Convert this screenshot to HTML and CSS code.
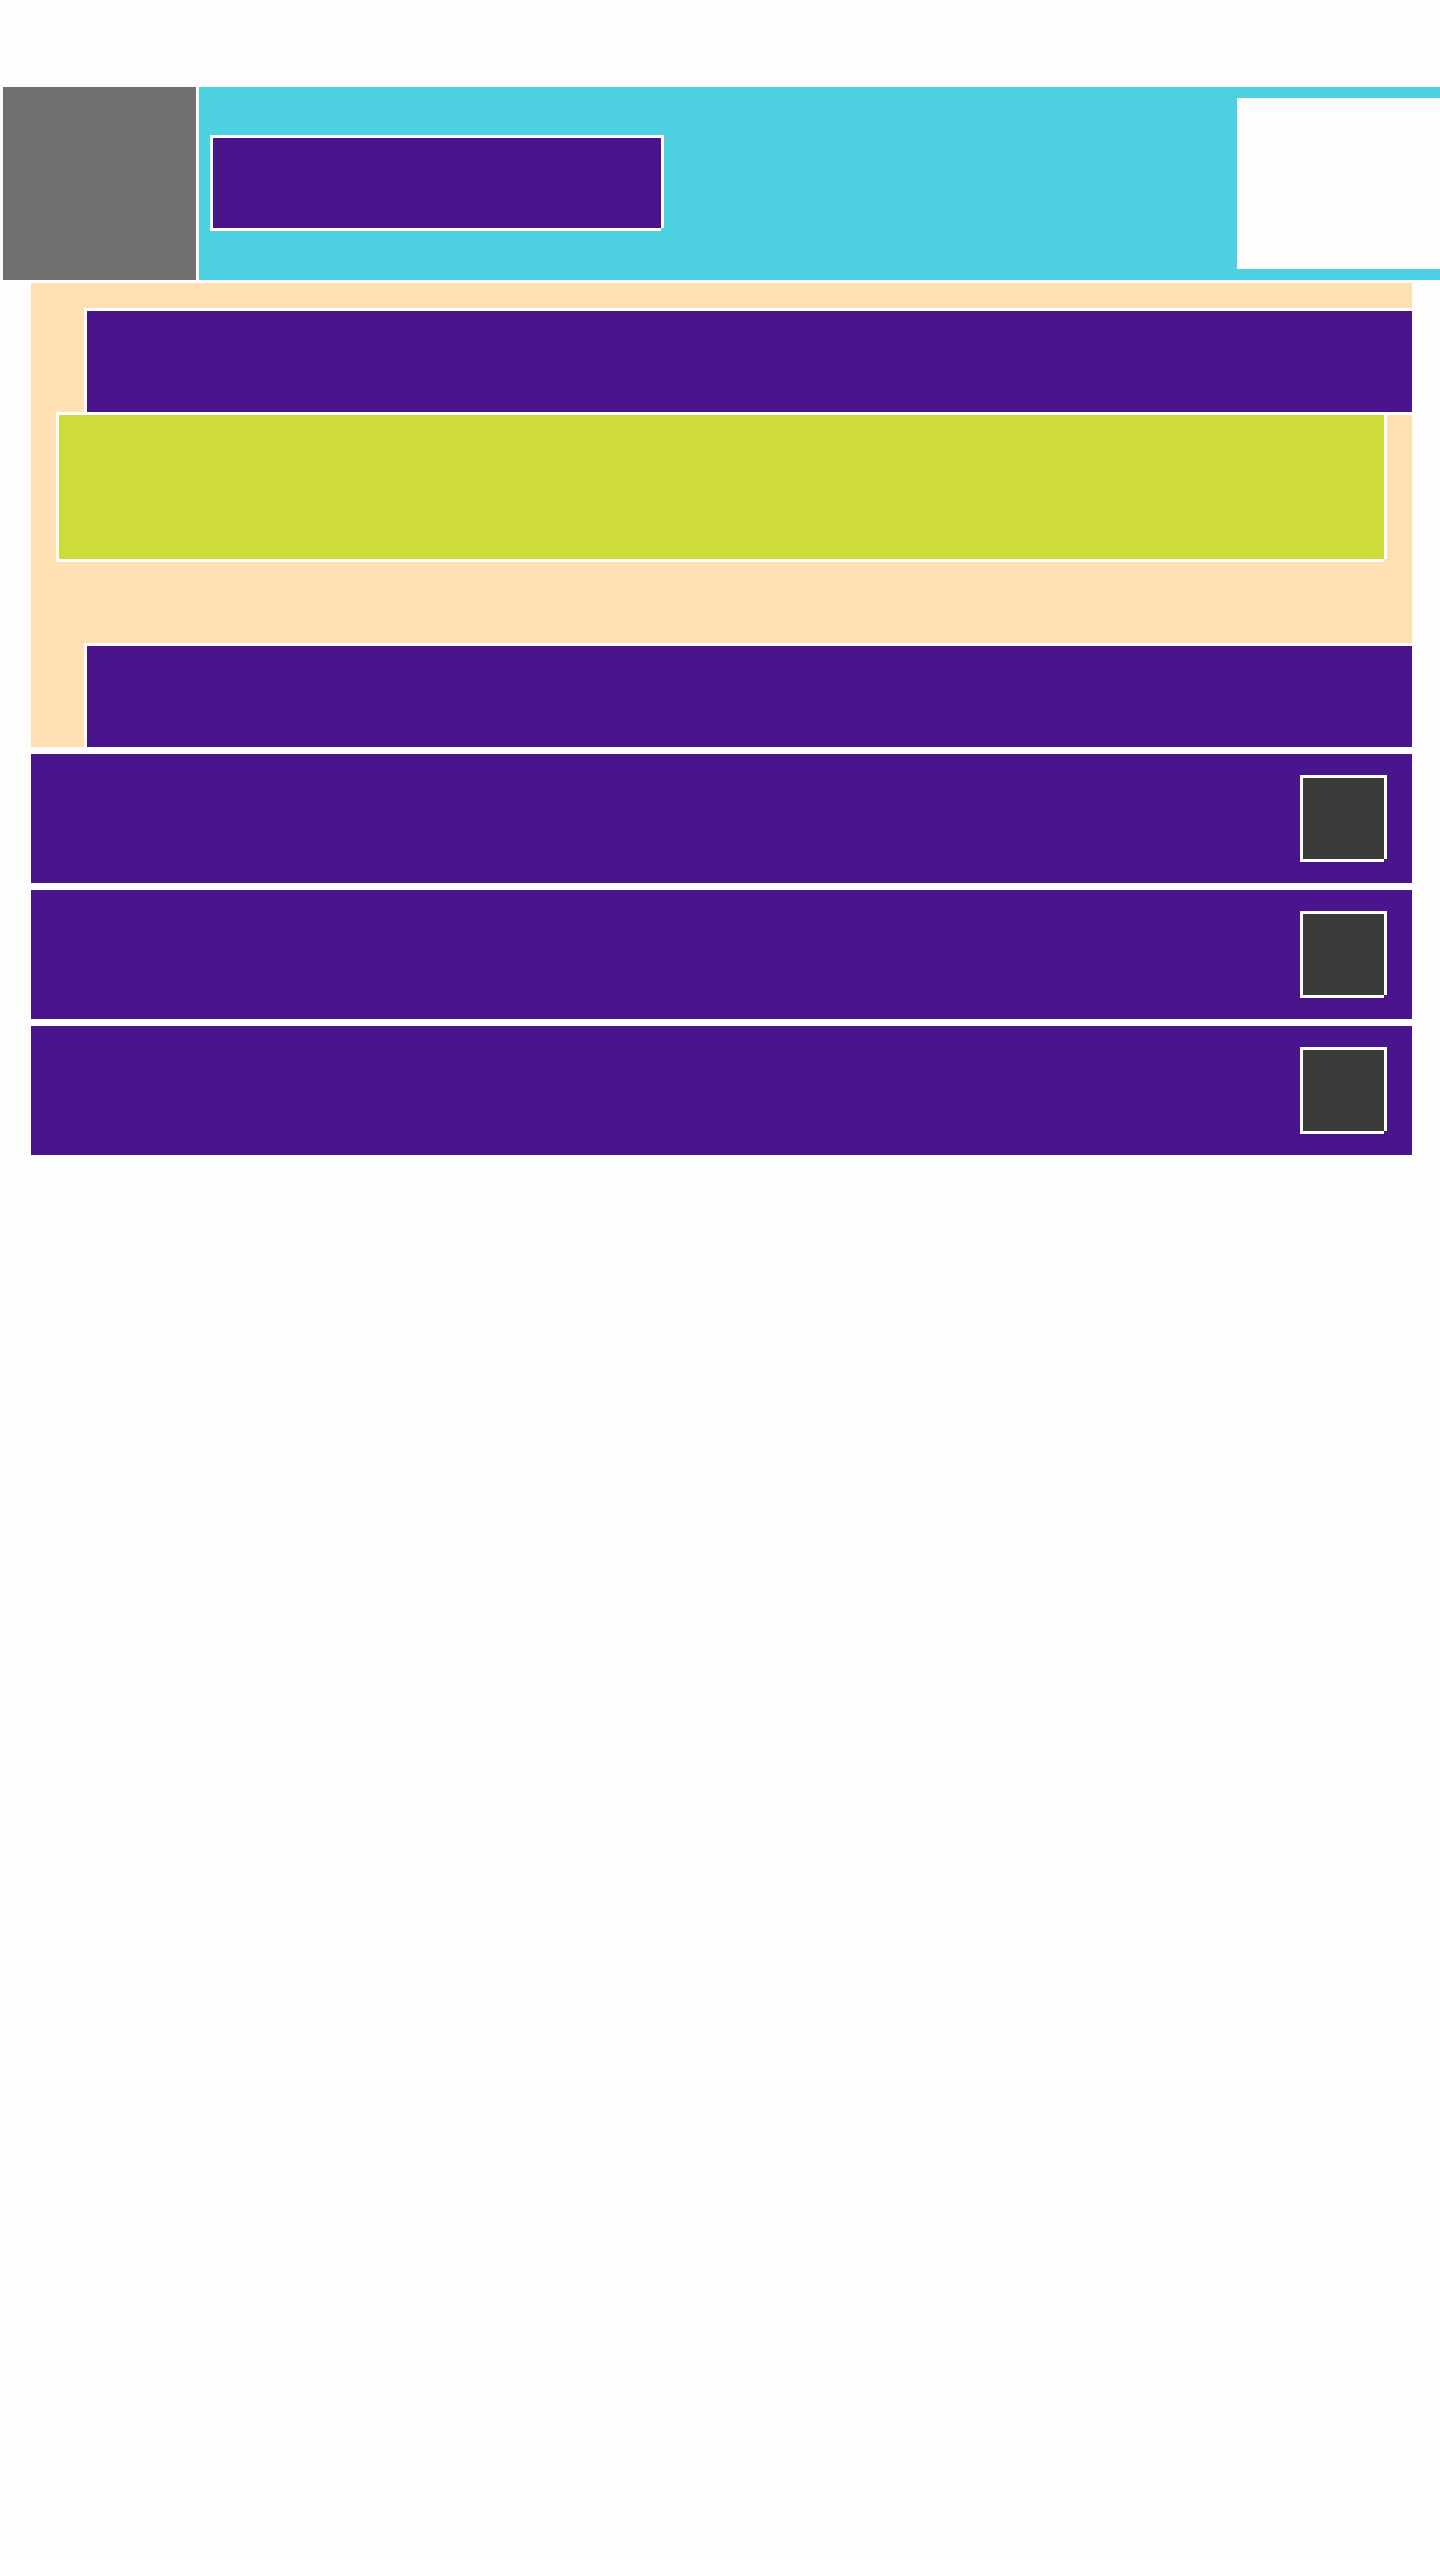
FILE: index.html
```html
<!DOCTYPE html>
<html lang="en">
<head>
<meta charset="utf-8">
<title>Layout</title>
<link rel="stylesheet" href="styles.css">
</head>
<body>
<div class="page">
  <header class="topbar">
    <div class="logo"></div>
    <div class="banner">
      <div class="title notch notch--cyan"></div>
      <div class="panel"></div>
    </div>
  </header>
  <main class="content">
    <section class="hero">
      <div class="hero-bar hero-bar--top"></div>
      <div class="hero-card notch notch--peach"></div>
      <div class="hero-bar hero-bar--bottom"></div>
    </section>
    <ul class="list">
      <li class="row"><span class="thumb notch notch--purple"></span></li>
      <li class="row"><span class="thumb notch notch--purple"></span></li>
      <li class="row"><span class="thumb notch notch--purple"></span></li>
    </ul>
  </main>
</div>
</body>
</html>
```
FILE: styles.css
```css
html, body {
  margin: 0;
  padding: 0;
}
body {
  background: #fdfdfd;
  font-family: "Liberation Sans", Arial, sans-serif;
  overflow-x: hidden;
}
.page {
  padding-top: 87px;
}
.topbar {
  display: flex;
  height: 193px;
  padding-left: 3px;
  gap: 3px;
}
.logo {
  flex: none;
  width: 193px;
  background: #707070;
}
.banner {
  flex: 1;
  min-width: 0;
  display: flex;
  align-items: flex-start;
  padding: 11px 0 11px 11px;
  background: #4dd0e1;
}
.title {
  flex: none;
  width: 448px;
  height: 90px;
  margin-top: 37px;
  background: #4a148c;
  border: 3px solid #ffffff;
}
.panel {
  flex: none;
  margin-left: auto;
  width: 203px;
  align-self: stretch;
  background: #fdfdfd;
}
.content {
  margin: 3px 28px 0 31px;
}
.hero {
  display: flex;
  flex-direction: column;
  padding-top: 25px;
  background: #ffe0b2;
}
.hero-bar {
  margin-left: 53px;
  height: 101px;
  background: #4a148c;
  border-top: 3px solid #ffffff;
  border-left: 3px solid #ffffff;
}
.hero-bar--top {
  border-bottom: 3px solid #ffffff;
}
.hero-bar--bottom {
  margin-top: 81px;
}
.hero-card {
  margin: -3px 25px 0;
  height: 144px;
  background: #cddc39;
  border: 3px solid #ffffff;
}
.list {
  list-style: none;
  margin: 7px 0 0;
  padding: 0;
  display: flex;
  flex-direction: column;
  gap: 7px;
}
.row {
  height: 129px;
  display: flex;
  align-items: center;
  justify-content: flex-end;
  padding-right: 25px;
  background: #4a148c;
}
.thumb {
  display: block;
  width: 81px;
  height: 81px;
  background: #3b3b3b;
  border: 3px solid #ffffff;
}
.notch {
  position: relative;
}
.notch::after {
  content: "";
  position: absolute;
  right: -3px;
  bottom: -3px;
  width: 3px;
  height: 3px;
  background: var(--notch-color);
}
.notch--cyan { --notch-color: #4dd0e1; }
.notch--peach { --notch-color: #ffe0b2; }
.notch--purple { --notch-color: #4a148c; }
```
